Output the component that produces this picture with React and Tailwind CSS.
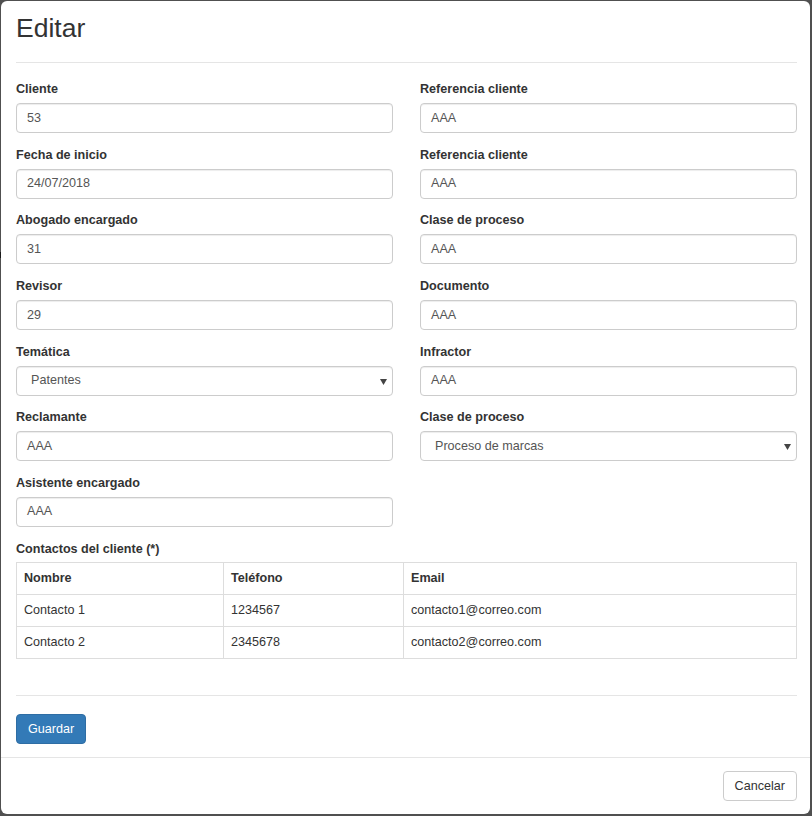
const fields = [
  { label: "Cliente", value: "53" },
  { label: "Referencia cliente", value: "AAA" },
  { label: "Fecha de inicio", value: "24/07/2018" },
  { label: "Referencia cliente", value: "AAA" },
  { label: "Abogado encargado", value: "31" },
  { label: "Clase de proceso", value: "AAA" },
  { label: "Revisor", value: "29" },
  { label: "Documento", value: "AAA" },
  { label: "Temática", value: "Patentes", select: true },
  { label: "Infractor", value: "AAA" },
  { label: "Reclamante", value: "AAA" },
  { label: "Clase de proceso", value: "Proceso de marcas", select: true },
  { label: "Asistente encargado", value: "AAA" },
];

const contacts = [
  { name: "Contacto 1", phone: "1234567", email: "contacto1@correo.com" },
  { name: "Contacto 2", phone: "2345678", email: "contacto2@correo.com" },
];

function Field({ label, value, select }) {
  return (
    <div className="flex flex-col">
      <label className="h-[20px] leading-[22px] mb-[5px] font-bold text-[#333]">{label}</label>
      {select ? (
        <div className="relative h-[30px] border border-[#ccc] rounded-[4px] shadow-[inset_0_1px_1px_rgba(0,0,0,0.075)] flex items-center pl-[14px] text-[#555]">
          {value}
          <svg className="absolute right-[5px] top-[12px]" width="7" height="6" viewBox="0 0 7 6">
            <path d="M0 0h7L3.5 6z" fill="#444" />
          </svg>
        </div>
      ) : (
        <div className="h-[30px] border border-[#ccc] rounded-[4px] shadow-[inset_0_1px_1px_rgba(0,0,0,0.075)] flex items-center px-[10px] text-[#555]">
          {value}
        </div>
      )}
    </div>
  );
}

export default function App() {
  return (
    <div className="relative w-[812px] h-[816px] bg-[#505050] pt-px pl-px pr-[2px] pb-[2px] font-['Liberation_Sans',Arial,sans-serif] text-[12.6px] text-[#333]">
      <div className="absolute left-0 top-[252px] w-px h-[6px] bg-[#1a1a1a]" />
      <div className="h-full bg-white rounded-[6px] flex flex-col">
        <div className="pl-[15px] pr-[13px]">
          <h2 className="mt-[13px] text-[26.5px] leading-[29px] text-[#333]">Editar</h2>
          <div className="mt-[19px] h-px bg-[#e5e5e5]" />
        </div>

        <div className="pl-[15px] pr-[13px] pt-[15px]">
          <div className="grid grid-cols-2 gap-x-[27px] gap-y-[10.67px]">
            {fields.map((f, i) => (
              <Field key={i} {...f} />
            ))}
          </div>

          <div className="mt-[10.67px] h-[20px] leading-[22px] mb-[4.5px] font-bold">Contactos del cliente (*)</div>
          <table className="w-full border-collapse border border-[#ddd]">
            <thead>
              <tr className="h-[32px]">
                <th className="w-[207px] border border-[#ddd] px-[7px] text-left font-bold">Nombre</th>
                <th className="w-[180px] border border-[#ddd] px-[7px] text-left font-bold">Teléfono</th>
                <th className="border border-[#ddd] px-[7px] text-left font-bold">Email</th>
              </tr>
            </thead>
            <tbody>
              {contacts.map((c) => (
                <tr key={c.name} className="h-[32px]">
                  <td className="border border-[#ddd] px-[7px]">{c.name}</td>
                  <td className="border border-[#ddd] px-[7px]">{c.phone}</td>
                  <td className="border border-[#ddd] px-[7px]">{c.email}</td>
                </tr>
              ))}
            </tbody>
          </table>

          <div className="mt-[36px] h-px bg-[#e5e5e5]" />
          <button className="mt-[18px] h-[30px] px-[11px] rounded-[4px] bg-[#337ab7] border border-[#2e6da4] text-white">
            Guardar
          </button>
        </div>

        <div className="mt-[13px] border-t border-[#e5e5e5] flex-1 flex justify-end items-start pt-[13px] pl-[15px] pr-[13px]">
          <button className="h-[30px] px-[11px] rounded-[4px] bg-white border border-[#ccc] text-[#333]">
            Cancelar
          </button>
        </div>
      </div>
    </div>
  );
}
